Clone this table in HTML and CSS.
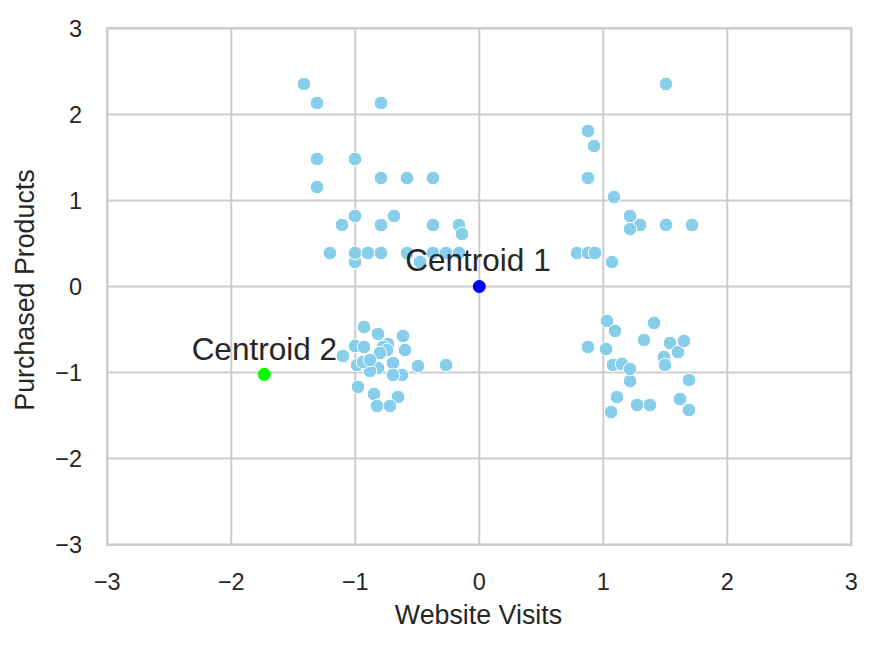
FILE: index.html
```html
<!DOCTYPE html>
<html>
<head>
<meta charset="utf-8">
<link rel="stylesheet" href="styles.css">
</head>
<body>
<svg class="chart" width="876" height="647" viewBox="0 0 876 647">
  <g class="grid">
    <line x1="231.3" y1="28.3" x2="231.3" y2="544.7"/>
    <line x1="355.3" y1="28.3" x2="355.3" y2="544.7"/>
    <line x1="479.3" y1="28.3" x2="479.3" y2="544.7"/>
    <line x1="603.3" y1="28.3" x2="603.3" y2="544.7"/>
    <line x1="727.3" y1="28.3" x2="727.3" y2="544.7"/>
    <line x1="107.3" y1="114.4" x2="851.3" y2="114.4"/>
    <line x1="107.3" y1="200.4" x2="851.3" y2="200.4"/>
    <line x1="107.3" y1="286.5" x2="851.3" y2="286.5"/>
    <line x1="107.3" y1="372.6" x2="851.3" y2="372.6"/>
    <line x1="107.3" y1="458.6" x2="851.3" y2="458.6"/>
  </g>
  <rect class="frame" x="107.3" y="28.3" width="744" height="516.4"/>

  <g class="pts">
    <circle cx="304" cy="84" r="6.8"/>
    <circle cx="317" cy="103" r="6.8"/>
    <circle cx="381" cy="103" r="6.8"/>
    <circle cx="317" cy="159" r="6.8"/>
    <circle cx="355" cy="159" r="6.8"/>
    <circle cx="381" cy="178" r="6.8"/>
    <circle cx="407" cy="178" r="6.8"/>
    <circle cx="433" cy="178" r="6.8"/>
    <circle cx="317" cy="187" r="6.8"/>
    <circle cx="342" cy="225" r="6.8"/>
    <circle cx="355" cy="216" r="6.8"/>
    <circle cx="381" cy="225" r="6.8"/>
    <circle cx="394" cy="216" r="6.8"/>
    <circle cx="433" cy="225" r="6.8"/>
    <circle cx="459" cy="225" r="6.8"/>
    <circle cx="462" cy="234" r="6.8"/>
    <circle cx="330" cy="253" r="6.8"/>
    <circle cx="355" cy="262" r="6.8"/>
    <circle cx="355" cy="253" r="6.8"/>
    <circle cx="368" cy="253" r="6.8"/>
    <circle cx="381" cy="253" r="6.8"/>
    <circle cx="407" cy="253" r="6.8"/>
    <circle cx="420" cy="262" r="6.8"/>
    <circle cx="433" cy="253" r="6.8"/>
    <circle cx="446" cy="253" r="6.8"/>
    <circle cx="459" cy="253" r="6.8"/>

    <circle cx="666" cy="84" r="6.8"/>
    <circle cx="588" cy="131" r="6.8"/>
    <circle cx="594" cy="146" r="6.8"/>
    <circle cx="588" cy="178" r="6.8"/>
    <circle cx="614" cy="197" r="6.8"/>
    <circle cx="640" cy="225" r="6.8"/>
    <circle cx="630" cy="229" r="6.8"/>
    <circle cx="630" cy="216" r="6.8"/>
    <circle cx="666" cy="225" r="6.8"/>
    <circle cx="692" cy="225" r="6.8"/>
    <circle cx="577" cy="253" r="6.8"/>
    <circle cx="588" cy="253" r="6.8"/>
    <circle cx="595" cy="253" r="6.8"/>
    <circle cx="612" cy="262" r="6.8"/>

    <circle cx="364" cy="327" r="6.8"/>
    <circle cx="378" cy="334" r="6.8"/>
    <circle cx="403" cy="336" r="6.8"/>
    <circle cx="343" cy="356" r="6.8"/>
    <circle cx="355" cy="346" r="6.8"/>
    <circle cx="388" cy="344" r="6.8"/>
    <circle cx="383" cy="347" r="6.8"/>
    <circle cx="387" cy="350" r="6.8"/>
    <circle cx="364" cy="347" r="6.8"/>
    <circle cx="405" cy="350" r="6.8"/>
    <circle cx="380" cy="353" r="6.8"/>
    <circle cx="357" cy="365" r="6.8"/>
    <circle cx="378" cy="368" r="6.8"/>
    <circle cx="370" cy="371" r="6.8"/>
    <circle cx="393" cy="363" r="6.8"/>
    <circle cx="402" cy="375" r="6.8"/>
    <circle cx="393" cy="375" r="6.8"/>
    <circle cx="363" cy="362" r="6.8"/>
    <circle cx="370" cy="360" r="6.8"/>
    <circle cx="418" cy="366" r="6.8"/>
    <circle cx="446" cy="365" r="6.8"/>
    <circle cx="358" cy="387" r="6.8"/>
    <circle cx="374" cy="394" r="6.8"/>
    <circle cx="398" cy="397" r="6.8"/>
    <circle cx="377" cy="406" r="6.8"/>
    <circle cx="390" cy="406" r="6.8"/>

    <circle cx="607" cy="321" r="6.8"/>
    <circle cx="615" cy="331" r="6.8"/>
    <circle cx="654" cy="323" r="6.8"/>
    <circle cx="644" cy="340" r="6.8"/>
    <circle cx="588" cy="347" r="6.8"/>
    <circle cx="606" cy="349" r="6.8"/>
    <circle cx="670" cy="343" r="6.8"/>
    <circle cx="678" cy="352" r="6.8"/>
    <circle cx="684" cy="341" r="6.8"/>
    <circle cx="664" cy="357" r="6.8"/>
    <circle cx="665" cy="365" r="6.8"/>
    <circle cx="613" cy="365" r="6.8"/>
    <circle cx="622" cy="364" r="6.8"/>
    <circle cx="630" cy="381" r="6.8"/>
    <circle cx="630" cy="369" r="6.8"/>
    <circle cx="689" cy="380" r="6.8"/>
    <circle cx="617" cy="397" r="6.8"/>
    <circle cx="611" cy="412" r="6.8"/>
    <circle cx="637" cy="405" r="6.8"/>
    <circle cx="650" cy="405" r="6.8"/>
    <circle cx="680" cy="399" r="6.8"/>
    <circle cx="689" cy="410" r="6.8"/>
  </g>

  <circle class="c1" cx="479.3" cy="286.5" r="6.5"/>
  <circle class="c2" cx="264.3" cy="374.3" r="6.5"/>
  <text class="ann" x="478" y="271">Centroid 1</text>
  <text class="ann" x="264.3" y="360">Centroid 2</text>

  <g class="xt">
    <text x="107.3" y="590">−3</text>
    <text x="231.3" y="590">−2</text>
    <text x="355.3" y="590">−1</text>
    <text x="479.3" y="590">0</text>
    <text x="603.3" y="590">1</text>
    <text x="727.3" y="590">2</text>
    <text x="851.3" y="590">3</text>
  </g>
  <g class="yt">
    <text x="82" y="36.5">3</text>
    <text x="82" y="122.6">2</text>
    <text x="82" y="208.6">1</text>
    <text x="82" y="294.7">0</text>
    <text x="82" y="380.8">−1</text>
    <text x="82" y="466.8">−2</text>
    <text x="82" y="552.9">−3</text>
  </g>
  <text class="label" x="478.5" y="624">Website Visits</text>
  <text class="label" transform="translate(33.5 290) rotate(-90)">Purchased Products</text>
</svg>
</body>
</html>
```
FILE: styles.css
```css
html, body {
  margin: 0;
  padding: 0;
  background: #ffffff;
}
.chart {
  display: block;
  font-family: "Liberation Sans", Arial, sans-serif;
}
.grid line {
  stroke: #cccccc;
  stroke-width: 2;
}
.frame {
  fill: none;
  stroke: #cccccc;
  stroke-width: 2.5;
}
.pts circle {
  fill: #87ceeb;
  stroke: #ffffff;
  stroke-width: 1;
}
.c1 { fill: #0000ff; }
.c2 { fill: #00ff00; }
.ann {
  font-size: 31.5px;
  fill: #262626;
  text-anchor: middle;
}
.xt text {
  font-size: 23.5px;
  fill: #262626;
  text-anchor: middle;
}
.yt text {
  font-size: 23.5px;
  fill: #262626;
  text-anchor: end;
}
.label {
  font-size: 26.8px;
  fill: #262626;
  text-anchor: middle;
}
```
